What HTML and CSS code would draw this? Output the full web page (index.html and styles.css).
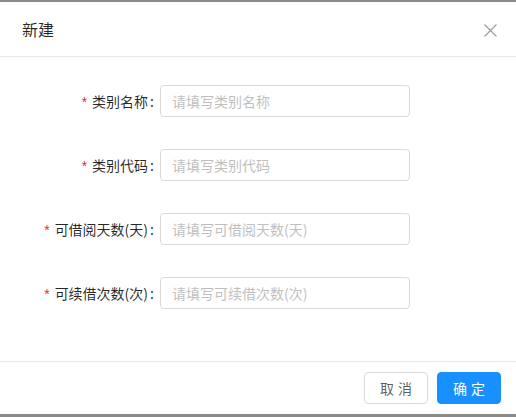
FILE: index.html
```html
<!DOCTYPE html>
<html lang="zh-CN">
<head>
<meta charset="utf-8">
<title>新建</title>
<link rel="stylesheet" href="styles.css">
</head>
<body>
<div class="modal">
  <div class="modal-header">
    <div class="modal-title">新建</div>
    <button class="modal-close" aria-label="关闭">
      <svg width="13" height="13" viewBox="0 0 13 13"><path d="M0.5 0.5 L12.5 12.5 M12.5 0.5 L0.5 12.5" stroke="currentColor" stroke-width="1.1" fill="none"/></svg>
    </button>
  </div>
  <div class="modal-body">
    <form class="form">
      <div class="form-row">
        <label class="form-label"><span class="req">*</span>类别名称<span class="colon">:</span></label>
        <input class="form-input" type="text" placeholder="请填写类别名称">
      </div>
      <div class="form-row">
        <label class="form-label"><span class="req">*</span>类别代码<span class="colon">:</span></label>
        <input class="form-input" type="text" placeholder="请填写类别代码">
      </div>
      <div class="form-row">
        <label class="form-label"><span class="req">*</span>可借阅天数(天)<span class="colon">:</span></label>
        <input class="form-input" type="text" placeholder="请填写可借阅天数(天)">
      </div>
      <div class="form-row">
        <label class="form-label"><span class="req">*</span>可续借次数(次)<span class="colon">:</span></label>
        <input class="form-input" type="text" placeholder="请填写可续借次数(次)">
      </div>
    </form>
  </div>
  <div class="modal-footer">
    <button class="btn">取<span class="gap"></span>消</button>
    <button class="btn btn-primary">确<span class="gap"></span>定</button>
  </div>
</div>
</body>
</html>
```

FILE: styles.css
```css
* { box-sizing: border-box; }
html, body {
  margin: 0;
  padding: 0;
}
body {
  background: #8a8a8a;
  width: 516px;
  height: 417px;
  overflow: hidden;
  font-family: "Noto Sans CJK SC", "Noto Sans", sans-serif;
  font-size: 14px;
}
.modal {
  margin-top: 2px;
  width: 516px;
  height: 412px;
  background: #fff;
  display: flex;
  flex-direction: column;
}
.modal-header {
  height: 55px;
  border-bottom: 1px solid #e8e8e8;
  display: flex;
  align-items: center;
  justify-content: space-between;
  padding-left: 22px;
}
.modal-title {
  font-size: 16px;
  line-height: 22px;
  color: rgba(0, 0, 0, 0.85);
}
.modal-close {
  width: 52px;
  height: 54px;
  border: 0;
  background: transparent;
  color: rgba(0, 0, 0, 0.4);
  display: flex;
  align-items: center;
  justify-content: center;
  padding: 0;
}
.modal-close svg { display: block; margin-top: 2px; }
.modal-body {
  flex: 1;
  padding-top: 28px;
}
.form {
  display: flex;
  flex-direction: column;
  gap: 32px;
}
.form-row {
  display: flex;
  align-items: center;
  height: 32px;
}
.form-label {
  width: 160px;
  text-align: right;
  color: rgba(0, 0, 0, 0.85);
  line-height: 22px;
  white-space: nowrap;
  padding-right: 6px;
}
.req {
  color: #f5222d;
  font-family: "Liberation Sans", sans-serif;
  font-size: 14px;
  margin-right: 5px;
}
.colon {
  margin-left: 2px;
}
.form-input {
  width: 250px;
  height: 32px;
  border: 1px solid #d9d9d9;
  border-radius: 4px;
  padding: 4px 11px;
  font-family: inherit;
  font-size: 14px;
  color: rgba(0, 0, 0, 0.65);
  outline: none;
}
.form-input::placeholder {
  color: #bfbfbf;
}
.modal-footer {
  border-top: 1px solid #e8e8e8;
  padding: 10px 15px 10px 16px;
  display: flex;
  justify-content: flex-end;
  gap: 9px;
}
.btn {
  height: 32px;
  padding: 0 15px;
  border: 1px solid #d9d9d9;
  border-radius: 4px;
  background: #fff;
  color: rgba(0, 0, 0, 0.65);
  font-family: inherit;
  font-size: 14px;
  line-height: 30px;
  display: inline-flex;
  align-items: center;
}
.gap {
  display: inline-block;
  width: 4px;
}
.btn-primary {
  background: #1890ff;
  border-color: #1890ff;
  color: #fff;
}
```
